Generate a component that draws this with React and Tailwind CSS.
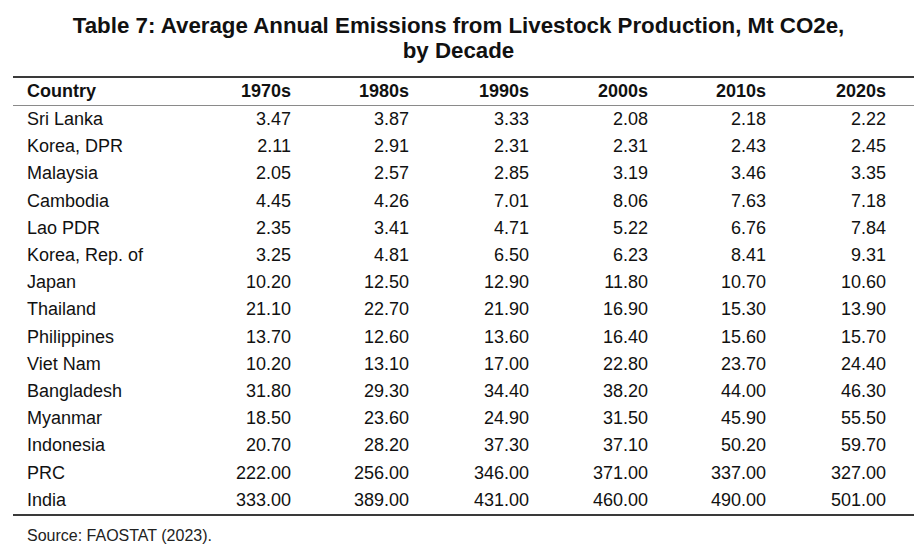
import React from 'react'

const years = ['1970s', '1980s', '1990s', '2000s', '2010s', '2020s']

const rows = [
  ['Sri Lanka', '3.47', '3.87', '3.33', '2.08', '2.18', '2.22'],
  ['Korea, DPR', '2.11', '2.91', '2.31', '2.31', '2.43', '2.45'],
  ['Malaysia', '2.05', '2.57', '2.85', '3.19', '3.46', '3.35'],
  ['Cambodia', '4.45', '4.26', '7.01', '8.06', '7.63', '7.18'],
  ['Lao PDR', '2.35', '3.41', '4.71', '5.22', '6.76', '7.84'],
  ['Korea, Rep. of', '3.25', '4.81', '6.50', '6.23', '8.41', '9.31'],
  ['Japan', '10.20', '12.50', '12.90', '11.80', '10.70', '10.60'],
  ['Thailand', '21.10', '22.70', '21.90', '16.90', '15.30', '13.90'],
  ['Philippines', '13.70', '12.60', '13.60', '16.40', '15.60', '15.70'],
  ['Viet Nam', '10.20', '13.10', '17.00', '22.80', '23.70', '24.40'],
  ['Bangladesh', '31.80', '29.30', '34.40', '38.20', '44.00', '46.30'],
  ['Myanmar', '18.50', '23.60', '24.90', '31.50', '45.90', '55.50'],
  ['Indonesia', '20.70', '28.20', '37.30', '37.10', '50.20', '59.70'],
  ['PRC', '222.00', '256.00', '346.00', '371.00', '337.00', '327.00'],
  ['India', '333.00', '389.00', '431.00', '460.00', '490.00', '501.00'],
]

const cols = 'grid grid-cols-[159px_119px_118px_120px_119px_118px_120px] pr-[28px]'

export default function App() {
  return (
    <div className="w-[921px] h-[553px] bg-white text-[#111] font-['Liberation_Sans',Arial,sans-serif] overflow-hidden">
      <h1 className="pt-[13px] pr-[4px] text-center text-[22.3px] leading-[25px] font-bold">
        Table 7: Average Annual Emissions from Livestock Production, Mt CO2e,
        <br />
        by Decade
      </h1>

      <div className="ml-[13px] w-[901px] mt-[13px] border-t-2 border-[#3a3a3a]">
        {/* header */}
        <div className={`${cols} h-[28px] items-center text-[18px] font-bold border-b border-[#8a8a8a]`}>
          <div className="pl-[14px]">Country</div>
          {years.map(y => (
            <div key={y} className="text-right">{y}</div>
          ))}
        </div>

        {rows.map(r => (
          <div key={r[0]} className={`${cols} h-[27.2px] items-center text-[18px]`}>
            <div className="pl-[14px]">{r[0]}</div>
            {r.slice(1).map((v, i) => (
              <div key={i} className="text-right">{v}</div>
            ))}
          </div>
        ))}
        <div className="border-t-2 border-[#3a3a3a]" />
      </div>

      <p className="mt-[10px] pl-[27px] text-[16px] leading-[20px] text-[#222]">Source: FAOSTAT (2023).</p>
    </div>
  )
}
